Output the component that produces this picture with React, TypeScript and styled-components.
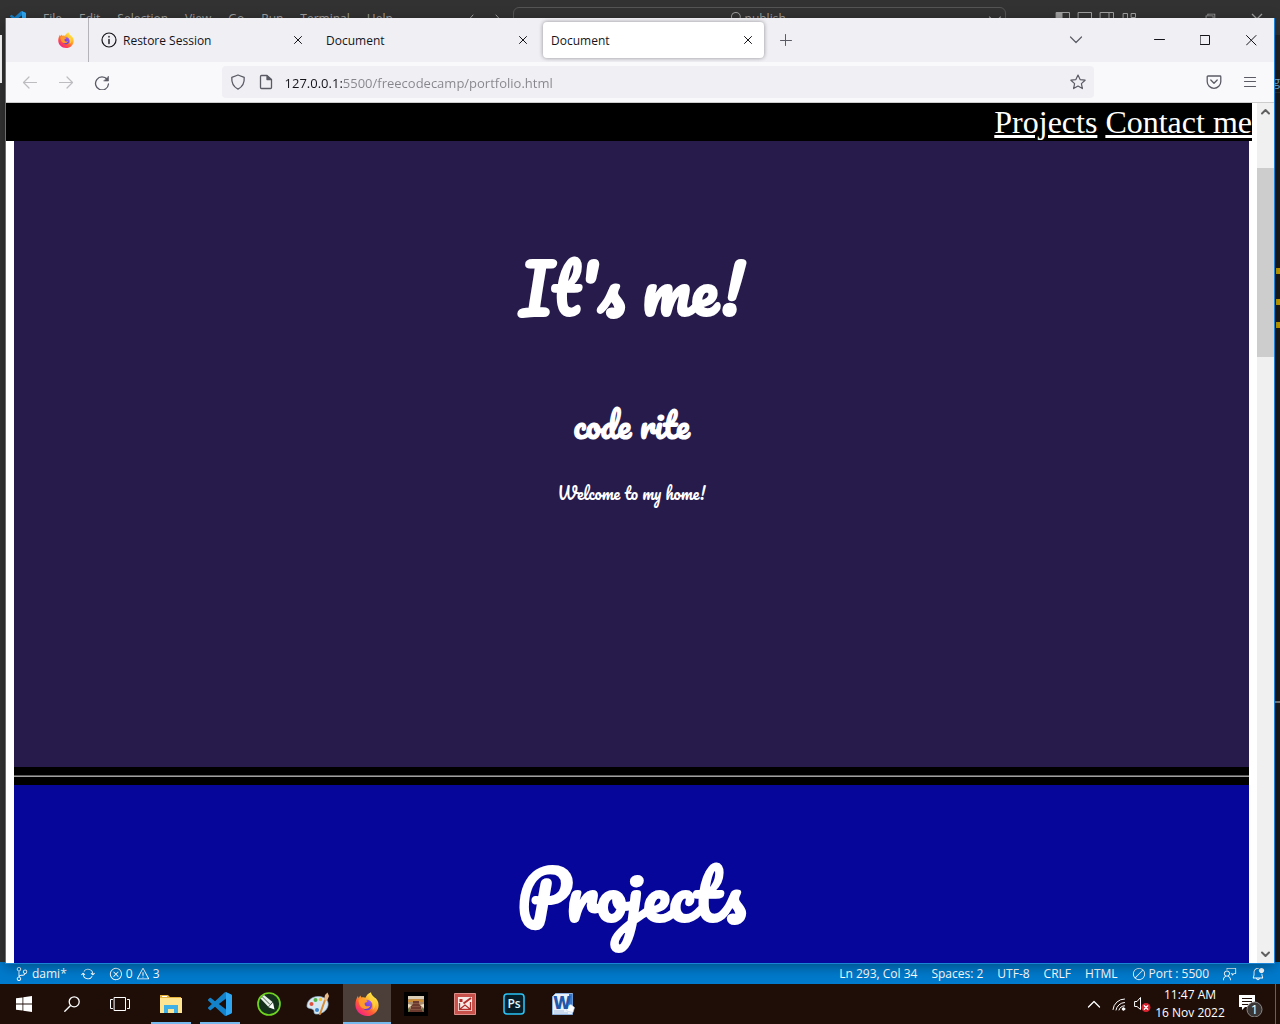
import React from "react";
import styled, { createGlobalStyle, css } from "styled-components";
import {
  VscSourceControl,
  VscSync,
  VscError,
  VscWarning,
  VscCircleSlash,
  VscFeedback,
  VscBellDot,
  VscChromeRestore,
  VscChromeClose,
  VscSearch,
  VscChevronDown,
} from "react-icons/vsc";

const uiFont = `"Segoe UI", "Open Sans", "Noto Sans", sans-serif`;
const scriptFont = `Pacifico, Lato, cursive`;

const GlobalStyle = createGlobalStyle`
  * { box-sizing: border-box; }
  body { margin: 0; background: #1e1e1e; }
  button { border: 0; padding: 0; margin: 0; background: none; color: inherit; font: inherit; }
  svg { display: block; flex: none; }
`;

const Desktop = styled.div`
  display: flex;
  flex-direction: column;
  height: 100vh;
  overflow: hidden;
  font-family: ${uiFont};
  font-size: 12px;
`;

const Workspace = styled.div`
  position: relative;
  flex: 1;
  min-height: 0;
  display: flex;
  flex-direction: column;
`;

/* ---------- editor window ---------- */

const EditorTitle = styled.header`
  display: flex;
  align-items: center;
  flex: none;
  height: 35px;
  padding: 2px 15px 0 0;
  background: #323233;
  color: #a0a0a0;
`;

const TitleLeft = styled.div`
  display: flex;
  align-items: center;
  flex: none;
  width: 40%;
  padding: 0 0 0 10px;
`;

const MenuBar = styled.nav`
  display: flex;
  gap: 17px;
  margin: 0 auto 0 17px;
  font-size: 12px;
  line-height: 20px;
`;

const CommandBox = styled.button`
  display: flex;
  align-items: center;
  justify-content: center;
  gap: 4px;
  flex: none;
  width: 39%;
  height: 23px;
  margin-left: 7px;
  padding-left: 17px;
  border: 1px solid #555555 !important;
  border-radius: 6px;
  > span { margin-right: auto; }
  > svg:first-child { margin-left: auto; }
`;

const TitleRight = styled.div`
  display: flex;
  align-items: center;
  gap: 8px;
  margin-left: auto;
`;

const WindowButtons = styled.div`
  display: flex;
  gap: 32px;
  margin-left: 58px;
`;

const EditorBody = styled.div`
  display: flex;
  flex: 1;
  min-height: 0;
`;

const ActivityBar = styled.div`
  width: 48px;
  background: #333333;
`;

const ActiveMark = styled.div`
  width: 2px;
  height: 48px;
  background: #ffffff;
`;

const EditorPane = styled.div`
  flex: 1;
  display: flex;
  flex-direction: column;
  background: #1b1b1b;
`;

const EditorTabs = styled.div`
  height: 35px;
  background: #252526;
`;

const Breadcrumb = styled.div`
  height: 23px;
  border-bottom: 1px solid #303030;
  color: #7ba7c4;
  font-size: 13px;
  line-height: 22px;
  text-align: right;
`;

const Ruler = styled.div`
  position: relative;
  flex: 1;
`;

const RulerMark = styled.i<{ $top: number; $line?: boolean }>`
  position: absolute;
  right: 0;
  top: ${(p) => p.$top}px;
  width: ${(p) => (p.$line ? 6 : 4)}px;
  height: ${(p) => (p.$line ? 2 : 6)}px;
  background: ${(p) => (p.$line ? "#7f7f7f" : "#c8a200")};
`;

const StatusBar = styled.footer`
  display: flex;
  align-items: center;
  justify-content: space-between;
  flex: none;
  height: 22px;
  padding: 1px 15px 0 15px;
  background: #007acc;
  color: #ffffff;
`;

const StatusGroup = styled.div`
  display: flex;
  gap: 14px;
`;

const StatusItem = styled.button`
  display: flex;
  align-items: center;
  gap: 3px;
  height: 22px;
  line-height: 22px;
  white-space: nowrap;
`;

/* ---------- browser window ---------- */

const Browser = styled.section`
  position: absolute;
  inset: 18px 5px 20px 5px;
  display: flex;
  flex-direction: column;
  border: 1px solid #1883d7;
  border-top: 0;
  background: #ffffff;
  box-shadow: 0 3px 12px rgba(0, 0, 0, 0.35);
`;

const TabStrip = styled.div`
  display: flex;
  align-items: center;
  flex: none;
  height: 44px;
  background: #f0eff4;
  color: #15141a;
`;

const Pinned = styled.button`
  display: flex;
  align-items: center;
  justify-content: flex-end;
  width: 83px;
  height: 44px;
  padding-right: 14px;
  border-right: 1px solid #b4b3b9 !important;
`;

const TabList = styled.div`
  display: flex;
  gap: 4px;
  margin-left: 4px;
`;

const Tab = styled.div<{ $active?: boolean }>`
  display: flex;
  align-items: center;
  width: 221px;
  height: 36px;
  padding: 0 8px;
  border-radius: 4px;
  ${(p) =>
    p.$active &&
    css`
      background: #ffffff;
      box-shadow: 0 0 4px rgba(0, 0, 0, 0.4);
    `}
`;

const TabLabel = styled.button`
  display: flex;
  align-items: center;
  gap: 6px;
  flex: 1;
  height: 36px;
`;

const NewTab = styled.button`
  margin-left: 14px;
`;

const Controls = styled.div`
  display: flex;
  align-items: center;
  margin-left: auto;
`;

const ControlButton = styled.button<{ $wide?: number }>`
  display: flex;
  align-items: center;
  justify-content: center;
  width: ${(p) => p.$wide || 46}px;
  height: 44px;
`;

const Toolbar = styled.div`
  display: flex;
  align-items: center;
  flex: none;
  height: 41px;
  background: #f9f9fb;
  border-bottom: 1px solid #cccccc;
  color: #5b5b66;
`;

const NavButtons = styled.div`
  display: flex;
  gap: 20px;
  width: 17%;
  padding-left: 16px;
`;

const AddressBar = styled.label`
  display: flex;
  align-items: center;
  flex: 1;
  height: 32px;
  padding: 0 8px;
  border-radius: 4px;
  background: #f0eff4;
`;

const AddressIcons = styled.span`
  display: flex;
  gap: 12px;
  margin-right: 11px;
`;

const AddressInput = styled.input`
  flex: 1;
  min-width: 0;
  height: 32px;
  padding: 2px 0 0;
  border: 0;
  outline: 0;
  font-family: ${uiFont};
  font-size: 13px;
  color: #77777d;
  background: linear-gradient(90deg, #15141a 57px, #85858b 57px);
  background-clip: text;
  -webkit-background-clip: text;
  -webkit-text-fill-color: transparent;
`;

const ToolbarRight = styled.div`
  display: flex;
  justify-content: flex-end;
  gap: 20px;
  width: 180px;
  padding-right: 16px;
`;

const Viewport = styled.div`
  display: flex;
  flex: 1;
  min-height: 0;
`;

const Page = styled.div`
  flex: 1;
  min-width: 0;
  overflow: hidden;
  background: #ffffff;
`;

const SiteNav = styled.nav`
  display: flex;
  justify-content: flex-end;
  gap: 8px;
  height: 38px;
  margin-right: 5px;
  background: #000000;
  font-family: "Liberation Serif", "Times New Roman", serif;
  font-size: 32px;
  line-height: 39px;
`;

const SiteLink = styled.a`
  color: #ffffff;
  text-decoration: underline;
`;

const SiteMain = styled.main`
  margin: 0 8px;
  font-family: ${scriptFont};
  text-align: center;
  color: #ffffff;
  background: #000000;
`;

const Hero = styled.section`
  padding: 87px 0 256px;
  background: #261b4b;
`;

const Heading = styled.h1`
  margin: 0;
  font-size: 66px;
  font-weight: 700;
  line-height: 120px;
`;

const SubHeading = styled.h2`
  margin: 41px 0 14px;
  font-size: 33px;
  font-weight: 700;
  line-height: 72px;
`;

const Tagline = styled.p`
  margin: 0;
  font-size: 16px;
  font-weight: 400;
  line-height: 36px;
`;

const Rule = styled.hr`
  margin: 8px 0;
  border: 0;
  border-top: 1px solid #5a5a5a;
  border-bottom: 1px solid #a0a0a0;
`;

const Projects = styled.section`
  padding: 49px 0 80px;
  background: #06069b;
`;

const MainFlow = styled.div`
  display: flow-root;
`;

const ScrollBar = styled.div`
  display: flex;
  flex-direction: column;
  width: 17px;
  background: #f0f0f0;
`;

const ScrollButton = styled.button`
  display: flex;
  align-items: center;
  justify-content: center;
  height: 17px;
`;

const ScrollSpace = styled.div<{ $share: number; $thumb?: boolean }>`
  flex: ${(p) => p.$share} 0 0;
  background: ${(p) => (p.$thumb ? "#cdcdcd" : "transparent")};
`;

/* ---------- taskbar ---------- */

const TaskBar = styled.footer`
  display: flex;
  align-items: stretch;
  flex: none;
  height: 40px;
  background: #1f0e08;
  color: #ffffff;
`;

const TaskGroup = styled.div<{ $gap?: number }>`
  display: flex;
  gap: ${(p) => p.$gap || 0}px;
  margin-right: 3px;
`;

const TaskButton = styled.button<{ $state?: "open" | "active" }>`
  display: flex;
  align-items: center;
  justify-content: center;
  width: 48px;
  height: 40px;
  background: ${(p) => (p.$state === "active" ? "#4c3e39" : "none")};
  ${(p) =>
    p.$state &&
    css`
      background-image: linear-gradient(#76b9ed, #76b9ed);
      background-repeat: no-repeat;
      background-position: bottom center;
      background-size: ${p.$state === "active" ? 48 : 40}px 2px;
    `}
`;

const Tray = styled.div`
  display: flex;
  align-items: center;
  margin-left: auto;
  padding-right: 4px;
`;

const TrayButton = styled.button<{ $left?: number }>`
  margin-left: ${(p) => p.$left || 0}px;
`;

const Clock = styled.time`
  width: 78px;
  text-align: center;
  line-height: 18px;
  white-space: nowrap;
`;

const ShowDesktop = styled.button`
  height: 40px;
  width: 1px;
  margin-left: 12px;
  background: #6a5f5b;
`;

/* ---------- drawings ---------- */

type IconProps = { size?: number };

const CodeLogo = ({ size = 24 }: IconProps) => (
  <svg width={size} height={size} viewBox="0 0 24 24">
    <path
      fill="#1482cb"
      d="M23.15 2.587L18.21.21a1.494 1.494 0 0 0-1.705.29l-9.46 8.63-4.12-3.128a.999.999 0 0 0-1.276.057L.327 7.261A1 1 0 0 0 .326 8.74L3.899 12 .326 15.26a1 1 0 0 0 .001 1.479L1.65 17.94a.999.999 0 0 0 1.276.057l4.12-3.128 9.46 8.63a1.492 1.492 0 0 0 1.704.29l4.942-2.377A1.5 1.5 0 0 0 24 20.06V3.939a1.5 1.5 0 0 0-.85-1.352zm-5.146 14.861L10.826 12l7.178-5.448v10.896z"
    />
    <path fill="#2ea6f2" d="M18 .2l5.2 2.4c.5.3.8.8.8 1.3v16.2c0 .5-.3 1-.8 1.3L18 23.8z" />
  </svg>
);

const FoxLogo = ({ size = 24, id }: IconProps & { id: string }) => (
  <svg width={size} height={size} viewBox="0 0 24 24">
    <defs>
      <linearGradient id={id + "a"} x1="0.85" y1="0.1" x2="0.2" y2="0.95">
        <stop offset="0" stopColor="#fff44f" />
        <stop offset="0.35" stopColor="#ffb02e" />
        <stop offset="0.65" stopColor="#ff5a36" />
        <stop offset="1" stopColor="#f2208a" />
      </linearGradient>
      <linearGradient id={id + "b"} x1="0.8" y1="0" x2="0.2" y2="1">
        <stop offset="0" stopColor="#a05bf0" />
        <stop offset="1" stopColor="#5a35d0" />
      </linearGradient>
    </defs>
    <path
      fill={`url(#${id}a)`}
      d="M16 0.3c.2 2.2 1.5 3.3 3.2 4.9 2.6 1.400 4.500 4.600 4.400 8.200C23.400 19.400 18.300 24 12.200 24 5.500 24 .4 19 .4 12.800c0-3.300 1-6.400 2.500-8.800l.8 2.200 1.500-2.600 1.200 2c1.500-.5 2.800-.4 4 .2 1.100-2.700 3-4.500 5.600-5.500z"
    />
    <circle cx="12" cy="13" r="5.200" fill={`url(#${id}b)`} />
    <path fill="#ff9a2b" d="M3.500 8.200c2-1.800 5-1.700 6.700-.2.800.1 2 .2 2.500.7-.2 1.400-1.800 1.600-2.900 2.300-.4 1 .1 2.700 1.600 3.200 1.500.4 2.500-.6 3.700-.2-.8 2.200-3.600 3.600-6.200 2.800-3.800-1.100-5.200-5-5.400-8.600z" />
    <path fill="#ffd23c" d="M15.500 1.500c.2 3 4.800 5.500 5 10 .2 3-1 5-3 6.500 1.500-3.500.8-7.500-2-9-1.800-2.200-1.500-5 0-7.500z" opacity="0.85" />
  </svg>
);

type StrokeProps = {
  w?: number;
  h?: number;
  d: string;
  color?: string;
  sw?: number;
  children?: React.ReactNode;
};

const Line = ({ w = 16, h = 16, d, color = "currentColor", sw = 1, children }: StrokeProps) => (
  <svg
    width={w}
    height={h}
    viewBox={`0 0 ${w} ${h}`}
    fill="none"
    stroke={color}
    strokeWidth={sw}
    strokeLinecap="round"
    strokeLinejoin="round"
  >
    <path d={d} />
    {children}
  </svg>
);

const CloseIcon = () => <Line d="M4.500 4.500l7 7M11.500 4.500l-7 7" />;

const FolderIcon = () => (
  <svg width="24" height="24" viewBox="0 0 24 24">
    <path fill="#e8b33a" d="M1 3h8l2 2h11v3H1z" />
    <path fill="#ffe592" d="M1 6h22v15H1z" />
    <path fill="#3fb0e5" d="M5 13h14v8h-4v-4H9v4H5z" />
    <path fill="#fff" d="M3 4h5v1H3z" />
  </svg>
);

const PenIcon = () => (
  <svg width="24" height="24" viewBox="0 0 24 24">
    <circle cx="12" cy="12" r="11" fill="#14301b" stroke="#6fd321" strokeWidth="1.700" />
    <path fill="#e8eee8" d="M3.500 6.500l3.500-3.500 8.500 7-4.200 4.700z" />
    <path stroke="#24402b" strokeWidth="0.800" d="M5.500 5l7.500 7.500" />
    <path fill="#fff" d="M16 10.500l1.500 7-6-2.200z" />
  </svg>
);

const PaletteIcon = () => (
  <svg width="24" height="24" viewBox="0 0 24 24">
    <path fill="#d7e7f2" stroke="#92b4cb" strokeWidth="0.700" d="M1 14C1 8 7 4 13 4.500c6 .5 10 4 9 9-1 5.500-7 9-12 8.500-3-.3-1-3-3-4.500S1 17 1 14z" />
    <circle cx="5.500" cy="12" r="2" fill="#e0503f" />
    <circle cx="9.500" cy="8" r="2" fill="#52b146" />
    <circle cx="14.500" cy="7.500" r="1.700" fill="#f2c230" />
    <circle cx="11" cy="18" r="2" fill="#3b86cf" />
    <path stroke="#d58a35" strokeWidth="2" strokeLinecap="round" d="M14 22l5-14" />
    <path fill="#e5b988" d="M18 8l1-5 2.500-2.500L23 4l-2 5z" />
  </svg>
);

const GameIcon = () => (
  <svg width="24" height="24" viewBox="0 0 24 24">
    <path fill="#000" d="M0 0h24v24H0z" />
    <path fill="#a88d70" d="M4 4h16v16H4z" />
    <path fill="#d9cdb8" d="M4 4h16v3H4z" />
    <path fill="#c98d3c" d="M4 8l5-1h6l5 1v2H4z" />
    <path fill="#6d3a30" d="M9 9h6v3l2 2v2l2 4H5l2-4v-2l2-2z" />
    <path stroke="#8d5a48" strokeWidth="0.800" d="M9 11.500h6M8 14.500h8M6.500 17.500h11" />
    <path fill="#eee1c2" d="M4 12l4 1-4 3zM20 12l-4 1 4 3z" />
    <path fill="#5c6b3a" d="M4 17l2-1-1 4H4zM20 17l-2-1 1 4h1z" />
  </svg>
);

const RedAppIcon = () => (
  <svg width="22" height="22" viewBox="0 0 22 22">
    <path fill="#c9514c" stroke="#dd8d87" d="M.5.5h21v21H.5z" />
    <path fill="#f7e9e6" d="M4 4h14v14H4z" />
    <path fill="none" stroke="#b42d2a" strokeWidth="2" d="M9.500 10.500L17 5" />
    <path fill="#b42d2a" d="M5.500 6h3v3h-3z" />
    <path fill="none" stroke="#b42d2a" strokeWidth="1.300" d="M5.500 10v6.500L11 12l5.500 4.500V9M6 16.500h10" />
  </svg>
);

const PsIcon = () => (
  <svg width="22" height="22" viewBox="0 0 22 22">
    <rect x="1" y="1" width="20" height="20" rx="3" fill="#041e2c" stroke="#29c3f5" strokeWidth="1.600" />
    <text x="11" y="15" textAnchor="middle" fontFamily="Open Sans, sans-serif" fontSize="12" fontWeight="600" fill="#e3f6fd">Ps</text>
  </svg>
);

const WordIcon = () => (
  <svg width="24" height="24" viewBox="0 0 24 24">
    <path fill="#e9f1fa" stroke="#8db1dd" d="M1.500 4.500l3-3h17v21h-20z" />
    <path fill="#3b77c4" d="M18 2h3.500v12H18z" />
    <path stroke="#a9c2e3" d="M3 19h10M3 21h14" />
    <path fill="#fff" stroke="#b9cde8" strokeWidth="0.600" d="M15 14.500l5-2 3.500 3-1.500 5-6-1.500z" />
    <text x="11" y="17" textAnchor="middle" fontFamily="Open Sans, sans-serif" fontSize="17" fontWeight="800" fill="#2057a8">W</text>
  </svg>
);

const menus = ["File", "Edit", "Selection", "View", "Go", "Run", "Terminal", "Help"];
const cursorInfo = ["Ln 293, Col 34", "Spaces: 2", "UTF-8", "CRLF", "HTML"];

const EditorWindow = () => (
  <>
    <EditorTitle>
      <TitleLeft>
        <CodeLogo size={16} />
        <MenuBar>
          {menus.map((m) => (
            <button key={m}>{m}</button>
          ))}
        </MenuBar>
        <Line w={44} d="M11 4L7 8.500l4 4M34 4l4 4.500-4 4" />
      </TitleLeft>
      <CommandBox>
        <VscSearch size={14} />
        <span>publish</span>
        <VscChevronDown size={20} />
      </CommandBox>
      <TitleRight>
        <Line w={82} d="M1.500 1.500h13v12h-13zM23.500 1.500h13v12h-13zM45.500 1.500h13v12h-13zM54 2v11M68.500 2.500h4v11h-4zM76.500 2.500h4v4h-4zM76.500 9.500h4v4h-4z">
          <path d="M2 2h5v11H2z" fill="currentColor" />
        </Line>
        <WindowButtons>
          <VscChromeRestore size={14} />
          <VscChromeClose size={16} />
        </WindowButtons>
      </TitleRight>
    </EditorTitle>
    <EditorBody>
      <ActivityBar>
        <ActiveMark />
      </ActivityBar>
      <EditorPane>
        <EditorTabs />
        <Breadcrumb>ng</Breadcrumb>
        <Ruler>
          <RulerMark $top={175} />
          <RulerMark $top={206} />
          <RulerMark $top={229} />
          <RulerMark $top={608} $line />
        </Ruler>
      </EditorPane>
    </EditorBody>
    <StatusBar>
      <StatusGroup>
        <StatusItem><VscSourceControl size={14} />dami*</StatusItem>
        <StatusItem aria-label="Sync"><VscSync size={14} /></StatusItem>
        <StatusItem><VscError size={14} />0<VscWarning size={14} />3</StatusItem>
      </StatusGroup>
      <StatusGroup>
        {cursorInfo.map((t) => (
          <StatusItem key={t}>{t}</StatusItem>
        ))}
        <StatusItem><VscCircleSlash size={14} />Port : 5500</StatusItem>
        <StatusItem aria-label="Feedback"><VscFeedback size={14} /></StatusItem>
        <StatusItem aria-label="Notifications"><VscBellDot size={14} /></StatusItem>
      </StatusGroup>
    </StatusBar>
  </>
);

const BrowserTab = ({ label, active, info }: { label: string; active?: boolean; info?: boolean }) => (
  <Tab $active={active}>
    <TabLabel>
      {info && (
        <Line d="M8 7.500v4M8 4.500v.5" sw={1.4}>
          <circle cx="8" cy="8" r="7" strokeWidth="1.200" />
        </Line>
      )}
      {label}
    </TabLabel>
    <button aria-label={`Close ${label}`}><CloseIcon /></button>
  </Tab>
);

const BrowserWindow = () => (
  <Browser>
    <TabStrip>
      <Pinned aria-label="Firefox"><FoxLogo size={16} id="pin" /></Pinned>
      <TabList>
        <BrowserTab label="Restore Session" info />
        <BrowserTab label="Document" />
        <BrowserTab label="Document" active />
      </TabList>
      <NewTab aria-label="New tab"><Line d="M7.500 2.500v11M2.500 8.500h11" color="#5b5b66" /></NewTab>
      <Controls>
        <ControlButton $wide={120} aria-label="List tabs"><Line d="M2.500 5L8 10.500 13.500 5" color="#5b5b66" sw={1.2} /></ControlButton>
        <ControlButton aria-label="Minimize"><Line w={11} h={11} d="M.5 4.500h10" /></ControlButton>
        <ControlButton aria-label="Maximize"><Line w={11} h={11} d="M.5.5h9v9H.5z" /></ControlButton>
        <ControlButton aria-label="Close"><Line w={11} h={11} d="M.5.5l9.500 9.500M10 .5L.5 10" /></ControlButton>
      </Controls>
    </TabStrip>
    <Toolbar>
      <NavButtons>
        <button aria-label="Back"><Line d="M14.500 8.500H1.500M7 3L1.500 8.500 7 14" color="#bcbcc1" sw={1.2} /></button>
        <button aria-label="Forward"><Line d="M1.500 8.500h13M9 3l5.500 5.500L9 14" color="#bcbcc1" sw={1.2} /></button>
        <button aria-label="Reload">
          <Line d="M13.200 5.500A6.500 6.500 0 1 0 14.500 10" sw={1.3}>
            <path d="M14.500 2.500v4.500H10z" fill="currentColor" strokeWidth="0.600" />
          </Line>
        </button>
      </NavButtons>
      <AddressBar>
        <AddressIcons>
          <Line d="M8 1l6.200 2.400c.4 5.200-1.400 9.300-6.200 11.800C3.200 12.700 1.400 8.600 1.800 3.400z" sw={1.3} />
          <Line d="M3.500 1.500H9L13.500 5.500v8a1 1 0 0 1-1 1H3.500a1 1 0 0 1-1-1V2.500a1 1 0 0 1 1-1z" sw={1.3}>
            <path d="M9 2v3.500h4z" fill="currentColor" />
          </Line>
        </AddressIcons>
        <AddressInput aria-label="Address" defaultValue="127.0.0.1:5500/freecodecamp/portfolio.html" />
        <Line d="M8 1l2.100 4.600 5 .6-3.700 3.400 1 5L8 12.100l-4.400 2.500 1-5L.9 6.200l5-.6z" sw={1.200} />
      </AddressBar>
      <ToolbarRight>
        <button aria-label="Pocket">
          <Line d="M2 2h12a.8.8 0 0 1 .8.8V7.500a6.800 6.800 0 0 1-13.600 0V2.800A.8.8 0 0 1 2 2zM4.800 6L8 9.200 11.200 6" sw={1.300} />
        </button>
        <button aria-label="Menu"><Line d="M2.500 3.500h11M2.500 7.500h11M2.500 12.500h11" sw={1.200} /></button>
      </ToolbarRight>
    </Toolbar>
    <Viewport>
      <Page>
        <SiteNav>
          <SiteLink href="#projects">Projects</SiteLink>
          <SiteLink href="#contact">Contact me</SiteLink>
        </SiteNav>
        <SiteMain>
          <Hero>
            <Heading>It's me!</Heading>
            <SubHeading>code rite</SubHeading>
            <Tagline>Welcome to my home!</Tagline>
          </Hero>
          <MainFlow><Rule /></MainFlow>
          <Projects id="projects">
            <Heading as="h2">Projects</Heading>
          </Projects>
        </SiteMain>
      </Page>
      <ScrollBar>
        <ScrollButton aria-label="Scroll up"><Line w={11} h={9} d="M2 6.500L5.500 3 9 6.500" color="#606060" sw={2} /></ScrollButton>
        <ScrollSpace $share={48} />
        <ScrollSpace $share={189} $thumb />
        <ScrollSpace $share={589} />
        <ScrollButton aria-label="Scroll down"><Line w={11} h={9} d="M2 2.500L5.500 6 9 2.500" color="#606060" sw={2} /></ScrollButton>
      </ScrollBar>
    </Viewport>
  </Browser>
);

export default function App() {
  return (
    <Desktop>
      <GlobalStyle />
      <Workspace>
        <EditorWindow />
        <BrowserWindow />
      </Workspace>
      <TaskBar>
        <TaskGroup>
          <TaskButton aria-label="Start">
            <svg width="16" height="16" viewBox="0 0 16 16" fill="#fff">
              <path d="M0 2.300l6.500-.9v6.100H0zM7.300 1.300L16 0v7.500H7.300zM0 8.400h6.500v6.200L0 13.700zM7.300 8.400H16V16l-8.700-1.200z" />
            </svg>
          </TaskButton>
          <TaskButton aria-label="Search">
            <Line d="M6.300 9.700L.8 15.200" sw={1.300}><circle cx="10.200" cy="5.800" r="5" /></Line>
          </TaskButton>
          <TaskButton aria-label="Task view">
            <Line w={20} d="M4.500 1.500h11v13h-11zM2.500 3.500h-2v9h2M17.500 3.500h2v9h-2" />
          </TaskButton>
        </TaskGroup>
        <TaskGroup $gap={1}>
          <TaskButton $state="open" aria-label="File Explorer"><FolderIcon /></TaskButton>
          <TaskButton $state="open" aria-label="Visual Studio Code"><CodeLogo /></TaskButton>
          <TaskButton aria-label="CorelDRAW"><PenIcon /></TaskButton>
          <TaskButton aria-label="Paint"><PaletteIcon /></TaskButton>
          <TaskButton $state="active" aria-label="Firefox"><FoxLogo id="task" /></TaskButton>
          <TaskButton aria-label="Game"><GameIcon /></TaskButton>
          <TaskButton aria-label="Picture Manager"><RedAppIcon /></TaskButton>
          <TaskButton aria-label="Photoshop"><PsIcon /></TaskButton>
          <TaskButton aria-label="Word"><WordIcon /></TaskButton>
        </TaskGroup>
        <Tray>
          <TrayButton aria-label="Hidden icons"><Line w={14} h={12} d="M1.500 9L7 3.500 12.500 9" sw={1.300} /></TrayButton>
          <TrayButton $left={11} aria-label="Network">
            <Line w={14} h={14} d="M1 12.500A11.500 11.500 0 0 1 12.500 2M4 13a9 9 0 0 1 8.500-7.500M7 13a6 6 0 0 1 5.500-4.200">
              <circle cx="11.500" cy="12" r="1.300" fill="currentColor" />
            </Line>
          </TrayButton>
          <TrayButton $left={8} aria-label="Volume">
            <Line w={17} d="M1 5.500h2l3.500-4v12l-3.500-3H1z">
              <circle cx="12" cy="11.500" r="4.500" fill="#d9232e" stroke="none" />
              <path d="M10.300 9.800l3.400 3.400M13.700 9.800l-3.400 3.400" strokeWidth="1.300" />
            </Line>
          </TrayButton>
          <Clock>
            11:47 AM
            <br />
            16 Nov 2022
          </Clock>
          <TrayButton $left={10} aria-label="1 notification">
            <svg width="24" height="26" viewBox="0 0 24 26">
              <path fill="#fff" d="M0 4h16v12H6l-3 3v-3H0z" />
              <path stroke="#1f0e08" d="M3 7.500h10M3 10.500h10M3 13.500h6" />
              <circle cx="15.500" cy="18.500" r="7.500" fill="#3a3635" stroke="#8b8684" />
              <text x="15.500" y="23" textAnchor="middle" fontFamily="Open Sans, sans-serif" fontSize="13" fill="#fff">1</text>
            </svg>
          </TrayButton>
          <ShowDesktop aria-label="Show desktop" />
        </Tray>
      </TaskBar>
    </Desktop>
  );
}
